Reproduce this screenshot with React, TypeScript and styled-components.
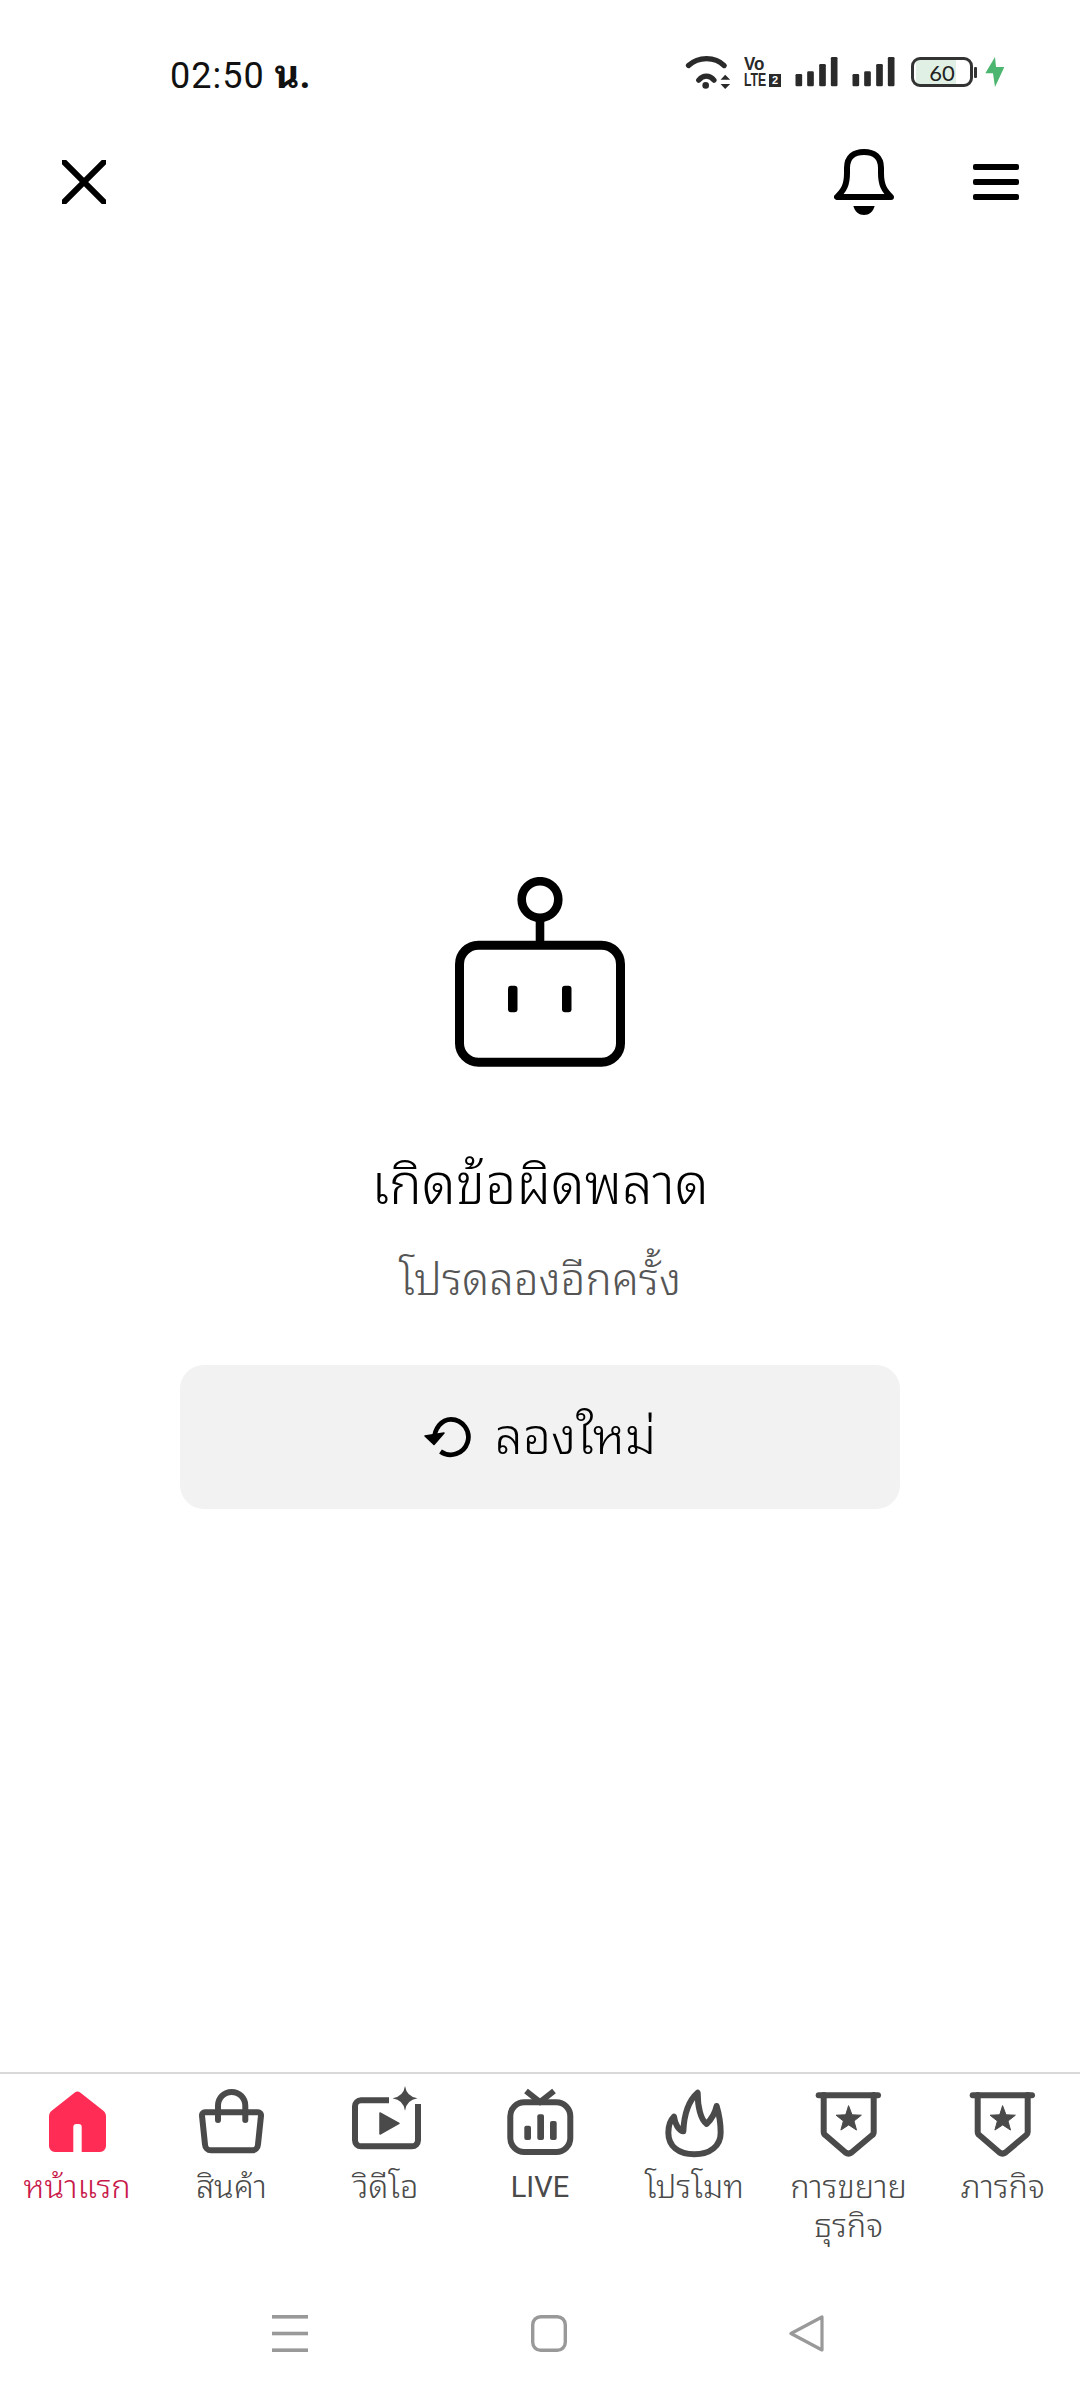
import React from 'react';
import styled, {createGlobalStyle} from 'styled-components';

const GlobalStyle = createGlobalStyle`
    html, body {
        margin: 0;
        padding: 0;
        background: #fff;
        font-family: Roboto, "Noto Sans Thai Looped", "Loma", "Waree", "Noto Sans", "Noto Sans Thai", sans-serif;
    }
`

const Page = styled.div`
    width: 1080px;
    height: 2400px;
    display: flex;
    flex-direction: column;
    background: #fff;
    overflow: hidden;
`

const StatusBar = styled.div`
    height: 148px;
    display: flex;
    align-items: center;
    justify-content: space-between;
    padding: 0 75px 0 170px;
`

const Time = styled.span`
    margin-bottom: 7px;
    font-size: 36px;
    letter-spacing: 1px;
    color: #111;
    white-space: nowrap;
`

const TimeSuffix = styled.span`
    font-size: 38px;
    font-weight: 700;
    letter-spacing: 0;
`

const StatusIcons = styled.div`
    display: flex;
    align-items: center;
    margin-bottom: 4px;
`

const Volte = styled.div`
    width: 37px;
    margin-left: 11px;
    display: flex;
    flex-direction: column;
    gap: 2px;
    font-family: "Liberation Sans", sans-serif;
    font-weight: 700;
    color: #2a2a2a;
`

const VolteTop = styled.span`
    font-size: 18.5px;
    line-height: 14px;
    transform: scaleX(0.92);
    transform-origin: left;
`

const VolteBottom = styled.div`
    display: flex;
    justify-content: space-between;
    align-items: center;
    height: 14px;
`

const VolteLte = styled.span`
    width: 24px;
    font-size: 18px;
    line-height: 14px;
    transform: scaleX(0.68);
    transform-origin: left;
`

const VolteSim = styled.span`
    width: 12px;
    height: 13px;
    background: #2a2a2a;
    color: #fff;
    font-size: 11px;
    line-height: 13px;
    text-align: center;
`

const Battery = styled.div<{level: number}>`
    box-sizing: border-box;
    width: 62px;
    height: 30px;
    margin: 0 1px 0 16px;
    border: 3px solid #333;
    border-radius: 9px;
    display: flex;
    align-items: center;
    justify-content: center;
    font-family: Lato, sans-serif;
    font-size: 22px;
    color: #222;
    background: linear-gradient(to right, #fff 2px, #e0f0e4 2px, #e0f0e4 ${p => p.level}px, #fff ${p => p.level}px);
`

const BatteryNub = styled.div`
    width: 3px;
    height: 11px;
    background: #333;
    border-radius: 1px;
    margin-right: 8px;
`

const Header = styled.header`
    height: 68px;
    display: flex;
    align-items: center;
    padding: 0 61px 0 62px;
`

const HeaderActions = styled.div`
    margin-left: auto;
    display: flex;
    align-items: center;
    gap: 79px;
`

const Main = styled.main`
    flex: 1;
    display: flex;
    flex-direction: column;
    align-items: center;
    padding-top: 661px;
`

const Title = styled.h1`
    margin: 86px 0 0;
    font-size: 55px;
    line-height: 64px;
    font-weight: 350;
    color: #000;
`

const Subtitle = styled.p`
    margin: 35px 0 0;
    font-size: 44px;
    line-height: 56px;
    font-weight: 350;
    color: #555;
`

const RetryButton = styled.button`
    margin-top: 57px;
    width: 720px;
    height: 144px;
    padding: 0 0 12px;
    border: 0;
    border-radius: 24px;
    background: #f2f2f2;
    display: flex;
    align-items: center;
    justify-content: center;
    gap: 23px;
    font-family: inherit;
    font-size: 50px;
    font-weight: 350;
    color: #000;
`

const RetryGlyph = styled.svg`
    margin-top: 12px;
`

const TabBar = styled.nav`
    height: 211px;
    box-sizing: border-box;
    border-top: 2px solid #d9d9d9;
    padding-top: 11px;
    display: grid;
    grid-template-columns: repeat(7, 1fr);
`

const Tab = styled.div<{active?: boolean}>`
    display: flex;
    flex-direction: column;
    align-items: center;
    color: ${p => (p.active ? '#c8184a' : '#4a4a4a')};
`

const TabLabel = styled.span<{latin?: boolean}>`
    margin-top: 7px;
    width: 140px;
    text-align: center;
    font-size: ${p => (p.latin ? 29 : 32.5)}px;
    line-height: 39px;
    font-weight: ${p => (p.latin ? 450 : 350)};
`

const SystemNav = styled.div`
    height: 117px;
    box-sizing: border-box;
    display: flex;
    align-items: center;
    padding: 0 0 17px 272px;
`

const NavSlot = styled.div<{width: number}>`
    width: ${p => p.width}px;
    display: flex;
`

function WifiIcon() {
    return (
        <svg width="50" height="38" viewBox="130 65 150 115" fill="none" stroke="#2a2a2a" strokeWidth="16" strokeLinecap="round">
            <path d="M146 103C176 75 226 75 254 103" />
            <path d="M177 147C190 131 210 131 223 147" />
            <circle cx="198" cy="163" r="10" fill="#2a2a2a" stroke="none" />
            <path d="M243 146H272L257 131ZM243 159H272L257 174Z" fill="#2a2a2a" stroke="none" />
        </svg>
    )
}

function VolteIcon() {
    return (
        <Volte>
            <VolteTop>Vo</VolteTop>
            <VolteBottom>
                <VolteLte>LTE</VolteLte>
                <VolteSim>2</VolteSim>
            </VolteBottom>
        </Volte>
    )
}

function SignalIcon({left}: {left: number}) {
    return (
        <svg width="43" height="30" viewBox="0 0 128 90" style={{marginLeft: left}} fill="#2a2a2a">
            <rect x="1" y="51" width="20" height="37" rx="4" />
            <rect x="36" y="43" width="20" height="45" rx="4" />
            <rect x="72" y="21" width="20" height="67" rx="4" />
            <rect x="107" y="0" width="20" height="88" rx="4" />
        </svg>
    )
}

function BoltIcon() {
    return (
        <svg width="20" height="30" viewBox="1036 82 60 90" fill="#4cb56f">
            <path d="M1066 82L1037 131H1060L1066 172L1094 112H1069Z" />
        </svg>
    )
}

function CloseIcon() {
    return (
        <svg width="44" height="44" viewBox="0 0 44 44" fill="none" stroke="#000" strokeWidth="6" strokeLinecap="square">
            <path d="M2 2L42 42M42 2L2 42" />
        </svg>
    )
}

function BellIcon() {
    return (
        <svg width="60" height="68" viewBox="54 28 60 68" fill="none" stroke="#000" strokeWidth="6" strokeLinejoin="round" strokeLinecap="round">
            <path d="M57 77H111C104 70 101 65 101 53V48C101 37 94 32 84 32C74 32 67 37 67 48V53C67 65 64 70 57 77Z" />
            <path d="M73.3 86H94.7C93 92 89 95 84 95C79 95 75 92 73.3 86Z" fill="#000" stroke="none" />
        </svg>
    )
}

function MenuIcon() {
    return (
        <svg width="46" height="36" viewBox="0 0 46 36" fill="#000">
            <rect y="0" width="46" height="6" rx="2" />
            <rect y="15" width="46" height="6" rx="2" />
            <rect y="30" width="46" height="6" rx="2" />
        </svg>
    )
}

function RobotIcon() {
    return (
        <svg width="172" height="190" viewBox="0 0 172 190" fill="none" stroke="#000" strokeWidth="8.6">
            <circle cx="86" cy="22.5" r="18.3" />
            <path d="M86 41V66" />
            <rect x="5.5" y="68.2" width="161" height="117" rx="19" strokeWidth="9" />
            <rect x="54" y="108.7" width="9.5" height="26.6" rx="3" fill="#000" stroke="none" />
            <rect x="108" y="108.7" width="9.5" height="26.6" rx="3" fill="#000" stroke="none" />
        </svg>
    )
}

function RetryIcon() {
    return (
        <RetryGlyph width="48" height="42" viewBox="0 0 48 42" fill="none" stroke="#000" strokeWidth="4.7">
            <path d="M10 25C10 12 18 3.3 27 3.3A17.7 17.7 0 1 1 16.5 35.5" />
            <path d="M1 20L10 28.5L20 17Z" fill="#000" stroke="#000" strokeWidth="1.5" strokeLinejoin="round" />
        </RetryGlyph>
    )
}

function HomeIcon() {
    return (
        <svg width="80" height="76" viewBox="0 0 80 76" fill="#ff2d55">
            <path d="M37.5 7.7a5 5 0 0 1 6 0L66 25.5a8 8 0 0 1 3 6.5V61a6 6 0 0 1-6 6H44.7V42a3 3 0 0 0-3-3h-2.4a3 3 0 0 0-3 3V67H18a6 6 0 0 1-6-6V32a8 8 0 0 1 3-6.5Z" />
        </svg>
    )
}

const outline = {fill: 'none', stroke: '#4a4a4a', strokeWidth: 6, strokeLinecap: 'round', strokeLinejoin: 'round'} as const

function BagIcon() {
    return (
        <svg width="80" height="76" viewBox="0 0 80 76" {...outline}>
            <path d="M14 27.3H67a3 3 0 0 1 3 3.3L67 59.5a6 6 0 0 1-6 5.8H20a6 6 0 0 1-6-5.8L11 30.6A3 3 0 0 1 14 27.3Z" />
            <path d="M27 35V20.6a13.65 13.65 0 0 1 27.3 0V35" />
        </svg>
    )
}

function VideoIcon() {
    return (
        <svg width="80" height="76" viewBox="0 0 80 76" {...outline}>
            <path d="M43 15.3H15a6 6 0 0 0-6 6V55.3a6 6 0 0 0 6 6H66a6 6 0 0 0 6-6V19" strokeLinecap="butt" />
            <path d="M59 1Q60.5 11.5 71.5 13.3Q60.5 15 59 25.8Q57.5 15 46.5 13.3Q57.5 11.5 59 1Z" fill="#4a4a4a" stroke="none" />
            <path d="M34 28L53 38.3L34 49Z" fill="#4a4a4a" strokeWidth="1.5" />
        </svg>
    )
}

function LiveIcon() {
    return (
        <svg width="80" height="76" viewBox="0 0 80 76" {...outline}>
            <rect x="10.3" y="17.3" width="60" height="49.7" rx="14" />
            <path d="M26 6L40 17L54 6" strokeLinecap="butt" strokeLinejoin="miter" />
            <g fill="#4a4a4a" stroke="none">
                <rect x="24.3" y="40.7" width="6.7" height="14.3" rx="2" />
                <rect x="37.3" y="29.3" width="6.7" height="25.7" rx="2" />
                <rect x="50" y="36" width="6.7" height="19" rx="2" />
            </g>
        </svg>
    )
}

function FireIcon() {
    return (
        <svg width="80" height="76" viewBox="762 75 240 228" {...outline} strokeWidth="18">
            <path d="M883 283C835 283 805 258 805 218C805 198 812 180 822 170C825 190 835 212 850 214C852 165 862 125 893 98C893 140 902 180 920 192C932 180 945 160 950 138C958 165 962 190 962 218C962 258 930 283 883 283Z" />
        </svg>
    )
}

function BadgeIcon() {
    return (
        <svg width="80" height="76" viewBox="0 0 80 76" {...outline}>
            <path d="M9.7 10.3H69" />
            <path d="M14.7 10V47a4 4 0 0 0 1.8 3.3L36.5 67.5a5 5 0 0 0 6 0L63 50.3a4 4 0 0 0 1.7-3.3V10" />
            <path d="M39.7 21L43 29.8L52.35 30.2L45 36L47.5 45.06L39.7 39.9L31.9 45.06L34.4 36L27.05 30.2L36.4 29.8Z" fill="#4a4a4a" strokeWidth="1" />
        </svg>
    )
}

function NavMenuIcon() {
    return (
        <svg width="36" height="37" viewBox="0 0 36 37" fill="#999">
            <rect y="0" width="36" height="3.6" />
            <rect y="16.7" width="36" height="3.6" />
            <rect y="33.4" width="36" height="3.6" />
        </svg>
    )
}

function NavHomeIcon() {
    return (
        <svg width="36" height="37" viewBox="0 0 36 37" fill="none" stroke="#999" strokeWidth="3.4">
            <rect x="1.7" y="1.7" width="32.6" height="33.6" rx="8" />
        </svg>
    )
}

function NavBackIcon() {
    return (
        <svg width="36" height="37" viewBox="0 0 36 37" fill="none" stroke="#999" strokeWidth="3.2" strokeLinejoin="round">
            <path d="M33 2V35L2 18.5Z" />
        </svg>
    )
}

const tabs = [
    {label: 'หน้าแรก', icon: <HomeIcon />, active: true},
    {label: 'สินค้า', icon: <BagIcon />},
    {label: 'วิดีโอ', icon: <VideoIcon />},
    {label: 'LIVE', icon: <LiveIcon />, latin: true},
    {label: 'โปรโมท', icon: <FireIcon />},
    {label: 'การขยายธุรกิจ', icon: <BadgeIcon />},
    {label: 'ภารกิจ', icon: <BadgeIcon />},
]

export default function App() {
    return (
        <>
            <GlobalStyle />
            <Page>
                <StatusBar>
                    <Time>02:50 <TimeSuffix>น.</TimeSuffix></Time>
                    <StatusIcons>
                        <WifiIcon />
                        <VolteIcon />
                        <SignalIcon left={14} />
                        <SignalIcon left={14} />
                        <Battery level={42}>60</Battery>
                        <BatteryNub />
                        <BoltIcon />
                    </StatusIcons>
                </StatusBar>
                <Header>
                    <CloseIcon />
                    <HeaderActions>
                        <BellIcon />
                        <MenuIcon />
                    </HeaderActions>
                </Header>
                <Main>
                    <RobotIcon />
                    <Title>เกิดข้อผิดพลาด</Title>
                    <Subtitle>โปรดลองอีกครั้ง</Subtitle>
                    <RetryButton>
                        <RetryIcon />
                        ลองใหม่
                    </RetryButton>
                </Main>
                <TabBar>
                    {tabs.map(tab => (
                        <Tab key={tab.label} active={tab.active}>
                            {tab.icon}
                            <TabLabel latin={tab.latin}>{tab.label}</TabLabel>
                        </Tab>
                    ))}
                </TabBar>
                <SystemNav>
                    <NavSlot width={258.5}><NavMenuIcon /></NavSlot>
                    <NavSlot width={258.5}><NavHomeIcon /></NavSlot>
                    <NavSlot width={36}><NavBackIcon /></NavSlot>
                </SystemNav>
            </Page>
        </>
    )
}
